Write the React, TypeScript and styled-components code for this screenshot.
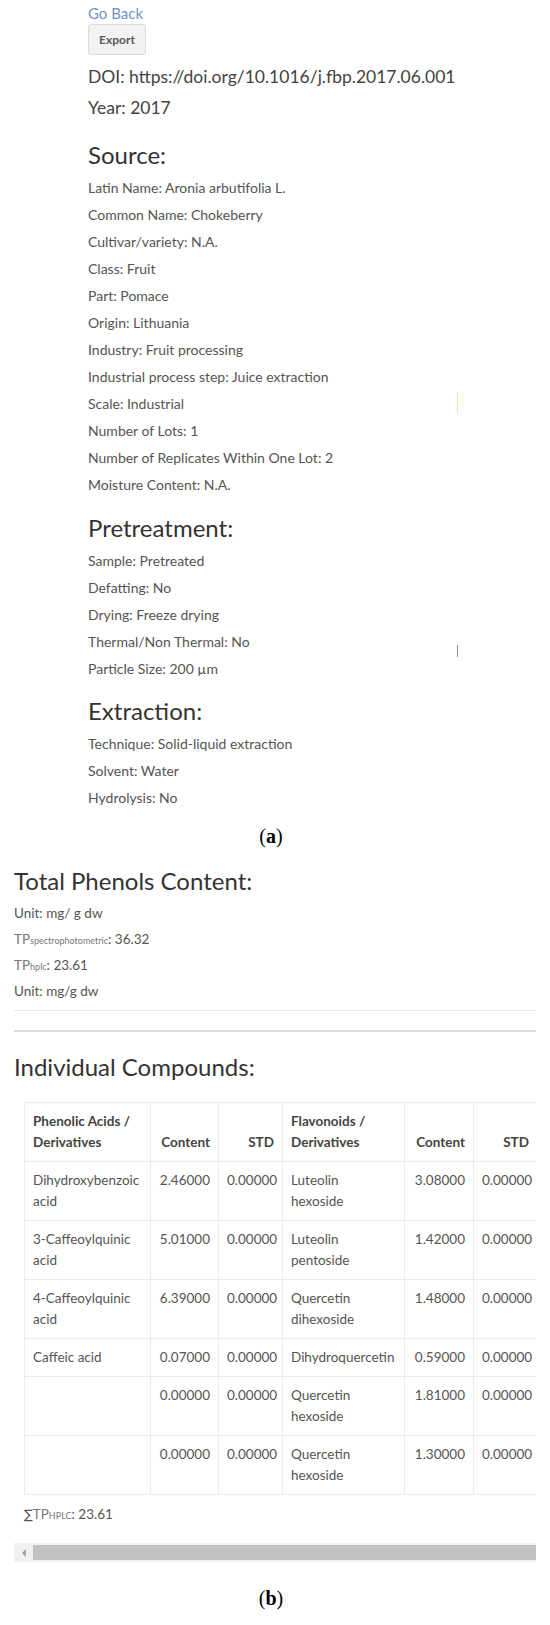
import React from "react";
import styled, { createGlobalStyle } from "styled-components";

const GlobalStyle = createGlobalStyle`
  html, body {
    margin: 0;
    padding: 0;
    background: #fff;
  }
  body {
    font-family: Lato, "Noto Sans", sans-serif;
    color: #555;
  }
`;

const Page = styled.div`
  width: 550px;
  position: relative;
`;

const RecordPanel = styled.div`
  position: relative;
  padding: 3px 0 0 88px;
`;

const BackLink = styled.a`
  display: block;
  font-size: 15px;
  line-height: 20px;
  color: #7093c6;
  text-decoration: none;
`;

const ExportButton = styled.button`
  display: block;
  margin-top: 1px;
  width: 58px;
  height: 31px;
  padding: 0;
  background: #f2f2f2;
  border: 1px solid #dcdcdc;
  border-radius: 3px;
  font-family: inherit;
  font-size: 12px;
  font-weight: 700;
  color: #5a5a5a;
`;

const MetaBlock = styled.div`
  padding-top: 6px;
`;

const MetaLine = styled.div`
  font-size: 17.5px;
  line-height: 31px;
  color: #444;
`;

const SectionTitle = styled.h3<{ $top?: number }>`
  margin: ${(p) => p.$top ?? 15}px 0 4px;
  font-size: 24px;
  font-weight: 400;
  line-height: 30px;
  color: #333;
`;

const Field = styled.div`
  font-size: 14px;
  line-height: 27px;
`;

const Mark = styled.span<{ $top: number; $h: number; $color: string }>`
  position: absolute;
  left: 457px;
  top: ${(p) => p.$top}px;
  width: 1px;
  height: ${(p) => p.$h}px;
  background: ${(p) => p.$color};
`;

const Caption = styled.div<{ $top: number }>`
  margin-top: ${(p) => p.$top}px;
  padding-right: 8px;
  height: 24px;
  text-align: center;
  font-family: "Liberation Serif", serif;
  font-size: 20px;
  line-height: 24px;
  color: #000;

  b {
    font-weight: 700;
  }
`;

const ResultsPanel = styled.div`
  padding: 0 14px;
`;

const Measure = styled.div`
  height: 26px;
  font-size: 13.5px;
  line-height: 26px;
`;

const Sub = styled.span<{ $caps?: boolean }>`
  font-size: 9px;
  line-height: 1;
  color: #777;
  text-transform: ${(p) => (p.$caps ? "uppercase" : "none")};
`;

const Tp = styled.span`
  color: #777;
`;

const Sigma = styled.span`
  font-family: "DejaVu Sans", sans-serif;
  font-size: 13px;
  line-height: 1;
  color: #555;
`;

const Rule = styled.div<{ $top: number; $weight: number; $color: string }>`
  margin-top: ${(p) => p.$top}px;
  border-top: ${(p) => p.$weight}px solid ${(p) => p.$color};
`;

const TableViewport = styled.div`
  margin-top: 20px;
  padding-left: 10px;
  overflow: hidden;
`;

const Table = styled.table`
  width: 513px;
  table-layout: fixed;
  border-collapse: collapse;
  font-size: 13.5px;
  line-height: 21px;
`;

const Th = styled.th<{ $num?: boolean }>`
  padding: 8px;
  border: 1px solid #ececec;
  vertical-align: bottom;
  white-space: pre;
  text-align: ${(p) => (p.$num ? "right" : "left")};
  font-weight: 700;
  color: #444;
`;

const Td = styled.td<{ $num?: boolean }>`
  padding: 8px;
  border: 1px solid #ececec;
  vertical-align: top;
  white-space: pre;
  text-align: ${(p) => (p.$num ? "right" : "left")};
  color: #555;
`;

const SumLine = styled.div`
  margin-top: 7px;
  height: 24px;
  padding-left: 10px;
  font-size: 13.5px;
  line-height: 24px;
`;

const ScrollTrack = styled.div`
  margin-top: 17px;
  height: 19px;
  display: flex;
  align-items: center;
  background: #f1f1f1;
`;

const ScrollArrow = styled.div`
  width: 19px;
  height: 19px;
  display: flex;
  align-items: center;
  justify-content: center;

  &::before {
    content: "";
    border-style: solid;
    border-width: 4px 4px 4px 0;
    border-color: transparent #a3a3a3 transparent transparent;
  }
`;

const ScrollThumb = styled.div`
  flex: 1;
  height: 15px;
  background: #c1c1c1;
`;

const source = [
  "Latin Name: Aronia arbutifolia L.",
  "Common Name: Chokeberry",
  "Cultivar/variety: N.A.",
  "Class: Fruit",
  "Part: Pomace",
  "Origin: Lithuania",
  "Industry: Fruit processing",
  "Industrial process step: Juice extraction",
  "Scale: Industrial",
  "Number of Lots: 1",
  "Number of Replicates Within One Lot: 2",
  "Moisture Content: N.A.",
];

const pretreatment = [
  "Sample: Pretreated",
  "Defatting: No",
  "Drying: Freeze drying",
  "Thermal/Non Thermal: No",
  "Particle Size: 200 µm",
];

const extraction = [
  "Technique: Solid-liquid extraction",
  "Solvent: Water",
  "Hydrolysis: No",
];

// names broken where the source page wraps them
const compounds = [
  ["Dihydroxybenzoic\nacid", "2.46000", "0.00000", "Luteolin\nhexoside", "3.08000", "0.00000"],
  ["3-Caffeoylquinic\nacid", "5.01000", "0.00000", "Luteolin\npentoside", "1.42000", "0.00000"],
  ["4-Caffeoylquinic\nacid", "6.39000", "0.00000", "Quercetin\ndihexoside", "1.48000", "0.00000"],
  ["Caffeic acid", "0.07000", "0.00000", "Dihydroquercetin", "0.59000", "0.00000"],
  ["", "0.00000", "0.00000", "Quercetin\nhexoside", "1.81000", "0.00000"],
  ["", "0.00000", "0.00000", "Quercetin\nhexoside", "1.30000", "0.00000"],
];

const widths = [126, 68, 64, 122, 69, 64];

export default function App() {
  return (
    <Page>
      <GlobalStyle />
      <RecordPanel>
        <BackLink href="#">Go Back</BackLink>
        <ExportButton type="button">Export</ExportButton>
        <MetaBlock>
          <MetaLine>DOI: https://doi.org/10.1016/j.fbp.2017.06.001</MetaLine>
          <MetaLine>Year: 2017</MetaLine>
        </MetaBlock>

        <SectionTitle $top={17}>Source:</SectionTitle>
        {source.map((x) => (
          <Field key={x}>{x}</Field>
        ))}

        <SectionTitle>Pretreatment:</SectionTitle>
        {pretreatment.map((x) => (
          <Field key={x}>{x}</Field>
        ))}

        <SectionTitle $top={14}>Extraction:</SectionTitle>
        {extraction.map((x) => (
          <Field key={x}>{x}</Field>
        ))}

        <Mark $top={392} $h={21} $color="#f3e3a0" />
        <Mark $top={645} $h={12} $color="#8c8cb0" />
      </RecordPanel>

      <Caption $top={13}>
        (<b>a</b>)
      </Caption>

      <ResultsPanel>
        <SectionTitle $top={18}>Total Phenols Content:</SectionTitle>
        <Measure>Unit: mg/ g dw</Measure>
        <Measure>
          <Tp>TP</Tp>
          <Sub>spectrophotometric</Sub>: 36.32
        </Measure>
        <Measure>
          <Tp>TP</Tp>
          <Sub>hplc</Sub>: 23.61
        </Measure>
        <Measure>Unit: mg/g dw</Measure>
        <Rule $top={6} $weight={1} $color="#e9e9e9" />
        <Rule $top={19} $weight={2} $color="#dedede" />

        <SectionTitle $top={20}>Individual Compounds:</SectionTitle>
        <TableViewport>
          <Table>
            <colgroup>
              {widths.map((w, i) => (
                <col key={i} style={{ width: w }} />
              ))}
            </colgroup>
            <thead>
              <tr>
                <Th>{"Phenolic Acids /\nDerivatives"}</Th>
                <Th $num>Content</Th>
                <Th $num>STD</Th>
                <Th>{"Flavonoids /\nDerivatives"}</Th>
                <Th $num>Content</Th>
                <Th $num>STD</Th>
              </tr>
            </thead>
            <tbody>
              {compounds.map((row, i) => (
                <tr key={i}>
                  {row.map((cell, j) => (
                    <Td key={j} $num={j % 3 !== 0}>
                      {cell}
                    </Td>
                  ))}
                </tr>
              ))}
            </tbody>
          </Table>
        </TableViewport>
        <SumLine>
          <Sigma>∑</Sigma>
          <Tp>TP</Tp>
          <Sub $caps>hplc</Sub>: 23.61
        </SumLine>
        <ScrollTrack>
          <ScrollArrow />
          <ScrollThumb />
        </ScrollTrack>
      </ResultsPanel>

      <Caption $top={24}>
        (<b>b</b>)
      </Caption>
    </Page>
  );
}
